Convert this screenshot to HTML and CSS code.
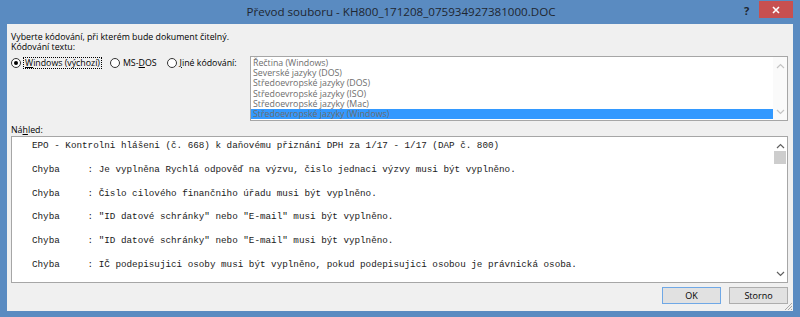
FILE: index.html
```html
<!DOCTYPE html>
<html lang="cs">

<head>
    <meta charset="UTF-8">
    <meta name="viewport" content="width=device-width, initial-scale=1.0">
    <title>Převod souboru</title>
    <link rel="stylesheet" href="styles.css">
</head>

<body>
    <div class="window">
        <div class="titlebar">
            <span class="title">Převod souboru - KH800_171208_075934927381000.DOC</span>
            <span class="help">?</span>
            <span class="close">
                <svg width="10" height="10" viewBox="0 0 10 10"><path d="M2 2 L8 8 M8 2 L2 8" stroke="#fff" stroke-width="1.6"/></svg>
            </span>
        </div>

        <div class="client">
            <div class="line">Vyberte kódování, při kterém bude dokument čitelný.</div>
            <div class="line">Kódování textu:</div>

            <div class="encoding">
                <label class="radio">
                    <span class="dot checked"></span>
                    <span class="focus"><u>W</u>indows (výchozí)</span>
                </label>
                <label class="radio dos">
                    <span class="dot"></span>
                    <span>MS-<u>D</u>OS</span>
                </label>
                <label class="radio">
                    <span class="dot"></span>
                    <span><u>J</u>iné kódování:</span>
                </label>

                <div class="listbox">
                    <div class="items">
                        <div class="item">Řečtina (Windows)</div>
                        <div class="item">Severské jazyky (DOS)</div>
                        <div class="item">Středoevropské jazyky (DOS)</div>
                        <div class="item">Středoevropské jazyky (ISO)</div>
                        <div class="item">Středoevropské jazyky (Mac)</div>
                        <div class="item selected">Středoevropské jazyky (Windows)</div>
                    </div>
                    <div class="scroll off">
                        <svg width="9" height="6" viewBox="0 0 9 6"><path d="M1 5 L4.5 1.5 L8 5" fill="none" stroke="#c4c4c4" stroke-width="1.2"/></svg>
                        <svg width="9" height="6" viewBox="0 0 9 6"><path d="M1 1 L4.5 4.5 L8 1" fill="none" stroke="#c4c4c4" stroke-width="1.2"/></svg>
                    </div>
                </div>
            </div>

            <div class="line label">Ná<u>h</u>led:</div>

            <div class="preview">
<pre class="text">EPO - Kontrolni hlášeni (č. 668) k daňovému přiznání DPH za 1/17 - 1/17 (DAP č. 800)

Chyba     : Je vyplněna Rychlá odpověď na výzvu, čislo jednaci výzvy musi být vyplněno.

Chyba     : Čislo cilového finančniho úřadu musi být vyplněno.

Chyba     : "ID datové schránky" nebo "E-mail" musi být vyplněno.

Chyba     : "ID datové schránky" nebo "E-mail" musi být vyplněno.

Chyba     : IČ podepisujici osoby musi být vyplněno, pokud podepisujici osobou je právnická osoba.</pre>
                <div class="scroll">
                    <svg width="9" height="6" viewBox="0 0 9 6"><path d="M1 5 L4.5 1.5 L8 5" fill="none" stroke="#606060" stroke-width="1.2"/></svg>
                    <div class="thumb"></div>
                    <div class="track"></div>
                    <svg width="9" height="6" viewBox="0 0 9 6"><path d="M1 1 L4.5 4.5 L8 1" fill="none" stroke="#606060" stroke-width="1.2"/></svg>
                </div>
            </div>

            <div class="buttons">
                <button class="btn default">OK</button>
                <button class="btn">Storno</button>
            </div>

            <svg class="grip" width="9" height="9" viewBox="0 0 9 9">
                <path d="M8 1 L1 8 M8 4 L4 8 M8 7 L7 8" stroke="#a8a8a8" stroke-width="1"/>
            </svg>
        </div>
    </div>
</body>

</html>
```

FILE: styles.css
```css
body {
    margin: 0;
    background-color: #5a8bc1;
    font-family: "Open Sans", "Noto Sans", sans-serif;
}

.window {
    width: 800px;
    height: 317px;
    display: flex;
    flex-direction: column;
}

.titlebar {
    position: relative;
    height: 24px;
    display: flex;
    align-items: center;
    justify-content: center;
}

.title {
    font-size: 11.6px;
    color: #1e2630;
    margin-top: -1px;
    margin-left: 2px;
}

.help {
    position: absolute;
    left: 744px;
    top: 3px;
    font-size: 11px;
    font-weight: bold;
    color: #1e2630;
}

.close {
    position: absolute;
    left: 759px;
    top: 1px;
    width: 34px;
    height: 17px;
    background-color: #c75050;
    display: flex;
    align-items: center;
    justify-content: center;
}

.client {
    position: relative;
    flex: 1;
    margin: 0 7px 6px 7px;
    padding: 8px 5px 7px 4px;
    background-color: #f0f0f0;
    display: flex;
    flex-direction: column;
    font-size: 8.8px;
    color: #000;
}

.line {
    line-height: 10px;
    height: 10px;
}

.encoding {
    display: flex;
    align-items: flex-start;
    margin-top: 4px;
}

.radio {
    display: flex;
    align-items: center;
    height: 12px;
    margin-top: 1px;
    margin-right: 8px;
}

.radio.dos {
    margin-right: 10px;
}

.dot {
    width: 8px;
    height: 8px;
    border: 1px solid #333;
    border-radius: 50%;
    background-color: #fff;
    margin-right: 3px;
    position: relative;
}

.dot.checked {
    margin-right: 2px;
}

.dot.checked::after {
    content: "";
    position: absolute;
    left: 2px;
    top: 2px;
    width: 4px;
    height: 4px;
    border-radius: 50%;
    background-color: #000;
}

.focus {
    border: 1px dotted #000;
    padding: 0 1px;
    line-height: 10px;
}

.listbox {
    margin-left: auto;
    width: 536px;
    height: 63px;
    border: 1px solid #a6a6a6;
    background-color: #fff;
    display: flex;
}

.items {
    flex: 1;
    padding-top: 1px;
}

.item {
    height: 10.2px;
    line-height: 10.2px;
    padding-left: 2px;
    color: #6d6d6d;
    white-space: nowrap;
}

.item.selected {
    background-color: #3399ff;
}

.scroll {
    width: 14px;
    display: flex;
    flex-direction: column;
    align-items: center;
    justify-content: space-between;
    padding: 6px 0 5px;
    background-color: #fafafa;
}

.label {
    margin-top: 4px;
}

.preview {
    margin-top: 1px;
    height: 145px;
    border: 1px solid #a6a6a6;
    background-color: #fff;
    display: flex;
}

.text {
    flex: 1;
    margin: 0;
    padding: 3px 0 0 20px;
    font-family: "Liberation Mono", monospace;
    font-size: 9.27px;
    line-height: 11.9px;
    color: #1a1a1a;
    overflow: hidden;
}

.preview .scroll {
    background-color: #fff;
    justify-content: flex-start;
    padding: 6px 0 5px;
}

.thumb {
    width: 12px;
    height: 13px;
    margin-top: 2px;
    background-color: #cdcdcd;
}

.track {
    flex: 1;
}

.buttons {
    display: flex;
    justify-content: flex-end;
    gap: 8px;
    margin-top: 4px;
}

.btn {
    width: 59px;
    height: 17px;
    padding: 0;
    border: 1px solid #adadad;
    background-color: #e1e1e1;
    font-family: "Open Sans", "Noto Sans", sans-serif;
    font-size: 9px;
    color: #000;
}

.btn.default {
    border-color: #6fa8e6;
}

.grip {
    position: absolute;
    right: 0;
    bottom: 0;
}
```
